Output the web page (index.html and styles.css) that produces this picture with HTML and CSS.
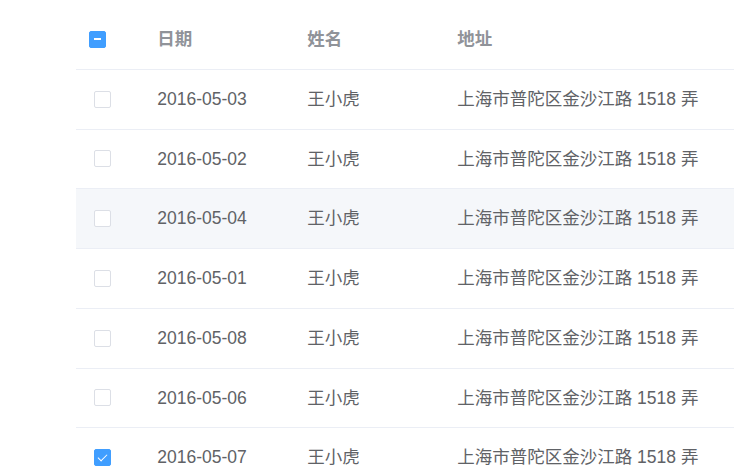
FILE: index.html
```html
<!DOCTYPE html>
<html>
<head>
  <title>Table Selection</title>
  <link rel="stylesheet" href="styles.css">
</head>
<body>
  <div class="table-wrap">
    <table class="el-table">
      <colgroup>
        <col class="col-select">
        <col class="col-date">
        <col class="col-name">
        <col class="col-address">
      </colgroup>
      <thead>
        <tr>
          <th class="select-cell"><span class="checkbox is-indeterminate"></span></th>
          <th><div class="cell">日期</div></th>
          <th><div class="cell">姓名</div></th>
          <th><div class="cell">地址</div></th>
        </tr>
      </thead>
      <tbody>
        <tr>
          <td class="select-cell"><span class="checkbox"></span></td>
          <td><div class="cell">2016-05-03</div></td>
          <td><div class="cell">王小虎</div></td>
          <td><div class="cell">上海市普陀区金沙江路 1518 弄</div></td>
        </tr>
        <tr>
          <td class="select-cell"><span class="checkbox"></span></td>
          <td><div class="cell">2016-05-02</div></td>
          <td><div class="cell">王小虎</div></td>
          <td><div class="cell">上海市普陀区金沙江路 1518 弄</div></td>
        </tr>
        <tr class="hover-row">
          <td class="select-cell"><span class="checkbox"></span></td>
          <td><div class="cell">2016-05-04</div></td>
          <td><div class="cell">王小虎</div></td>
          <td><div class="cell">上海市普陀区金沙江路 1518 弄</div></td>
        </tr>
        <tr>
          <td class="select-cell"><span class="checkbox"></span></td>
          <td><div class="cell">2016-05-01</div></td>
          <td><div class="cell">王小虎</div></td>
          <td><div class="cell">上海市普陀区金沙江路 1518 弄</div></td>
        </tr>
        <tr>
          <td class="select-cell"><span class="checkbox"></span></td>
          <td><div class="cell">2016-05-08</div></td>
          <td><div class="cell">王小虎</div></td>
          <td><div class="cell">上海市普陀区金沙江路 1518 弄</div></td>
        </tr>
        <tr>
          <td class="select-cell"><span class="checkbox"></span></td>
          <td><div class="cell">2016-05-06</div></td>
          <td><div class="cell">王小虎</div></td>
          <td><div class="cell">上海市普陀区金沙江路 1518 弄</div></td>
        </tr>
        <tr>
          <td class="select-cell"><span class="checkbox is-checked"></span></td>
          <td><div class="cell">2016-05-07</div></td>
          <td><div class="cell">王小虎</div></td>
          <td><div class="cell">上海市普陀区金沙江路 1518 弄</div></td>
        </tr>
      </tbody>
    </table>
  </div>
</body>
</html>
```

FILE: styles.css
```css
body {
  margin: 0;
  background: #fff;
  font-family: "Liberation Sans", Arial, "Noto Sans CJK SC", sans-serif;
  overflow: hidden;
}
.table-wrap {
  padding: 10px 0 0 76px;
}
.el-table {
  border-collapse: collapse;
  table-layout: fixed;
  width: 658px;
  font-size: 17.5px;
  color: #606266;
}
.col-select { width: 68.75px; }
.col-date { width: 150px; }
.col-name { width: 150px; }
.el-table th,
.el-table td {
  padding: 15px 0;
  border-bottom: 1px solid #ebeef5;
  text-align: left;
  vertical-align: middle;
}
.el-table th {
  color: #909399;
  font-weight: bold;
}
.cell {
  padding: 0 12.5px;
  line-height: 28.75px;
  white-space: nowrap;
  overflow: hidden;
}
.hover-row td {
  background-color: #f5f7fa;
}
.select-cell {
  padding-left: 18px !important;
}
th.select-cell {
  padding-left: 13px !important;
}
.checkbox {
  display: block;
  position: relative;
  width: 17px;
  height: 17px;
  box-sizing: border-box;
  border: 1px solid #dcdfe6;
  border-radius: 2px;
  background: #fff;
}
.checkbox.is-checked,
.checkbox.is-indeterminate {
  background: #409eff;
  border-color: #409eff;
}
.checkbox.is-indeterminate::before {
  content: "";
  position: absolute;
  left: 4px;
  right: 4px;
  top: 6.5px;
  height: 2px;
  background: #fff;
}
.checkbox.is-checked::after {
  content: "";
  position: absolute;
  left: 5px;
  top: 1.5px;
  width: 4px;
  height: 8px;
  border: 1.3px solid #fff;
  border-left: 0;
  border-top: 0;
  transform: rotate(45deg);
}
```
